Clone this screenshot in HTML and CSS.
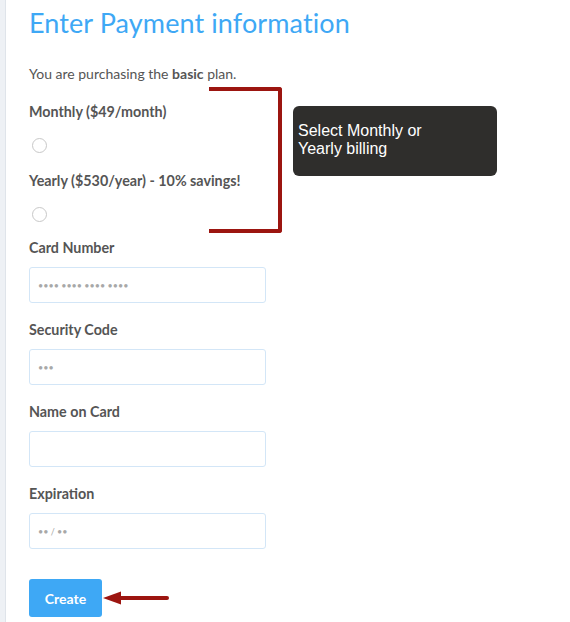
FILE: index.html
```html
<!DOCTYPE html>
<html>
<head>
<meta charset="utf-8">
<link rel="stylesheet" href="styles.css">
</head>
<body>
<div class="page">
  <div class="rail"></div>
  <main class="content">
    <h1 class="title">Enter Payment information</h1>
    <p class="intro">You are purchasing the <b>basic</b> plan.</p>
    <form class="form">
      <div class="field radio-field">
        <label class="label">Monthly ($49/month)</label>
        <input type="radio" name="plan" class="radio">
      </div>
      <div class="field radio-field">
        <label class="label">Yearly ($530/year) - 10% savings!</label>
        <input type="radio" name="plan" class="radio">
      </div>
      <div class="field text-field">
        <label class="label">Card Number</label>
        <input class="input" placeholder="•••• •••• •••• ••••">
      </div>
      <div class="field text-field">
        <label class="label">Security Code</label>
        <input class="input" placeholder="•••">
      </div>
      <div class="field text-field">
        <label class="label">Name on Card</label>
        <input class="input">
      </div>
      <div class="field text-field">
        <label class="label">Expiration</label>
        <input class="input" placeholder="•• / ••">
      </div>
      <button type="button" class="btn">Create</button>
    </form>
  </main>
  <div class="bracket"></div>
  <div class="tip">Select Monthly or<br>Yearly billing</div>
  <svg class="arrow" width="72" height="16" viewBox="0 0 72 16">
    <path d="M18 8 H66" stroke="#9c1510" stroke-width="4" stroke-linecap="round" fill="none"/>
    <path d="M2 8 L20 1.5 L20 14.5 Z" fill="#9c1510"/>
  </svg>
</div>
</body>
</html>
```

FILE: styles.css
```css
* { box-sizing: border-box; }
html, body { margin: 0; padding: 0; background: #fff; }
body { width: 570px; height: 622px; overflow: hidden; font-family: "Lato", "Open Sans", sans-serif; }
.page { position: relative; display: flex; height: 622px; }
.rail { width: 6px; flex: none; background: #eef1f5; border-right: 1px solid #dfe4ea; }
.content { padding: 6px 0 0 23px; color: #555; }
.title { margin: 0; font-weight: 400; font-size: 27px; line-height: 34px; color: #3ea8f5; letter-spacing: 0.1px; }
.intro { margin: 24px 0 0; font-size: 14px; line-height: 20px; }
.intro b { font-weight: 700; }
.form { display: flex; flex-direction: column; margin-top: 18px; }
.field { display: flex; flex-direction: column; }
.label { font-size: 14.3px; line-height: 20px; font-weight: 700; color: #555; }
.radio-field { height: 69px; }
.radio { appearance: none; -webkit-appearance: none; width: 15px; height: 15px; border: 1px solid #c8c8c8; border-radius: 50%; margin: 16px 0 0 3px; background: #fff; }
.text-field { height: 82px; }
.radio-field + .text-field { margin-top: -2px; }
.input { margin-top: 9px; width: 237px; height: 36px; border: 1px solid #d3e6f7; border-radius: 3px; padding: 0 8px; font-family: "Lato", sans-serif; font-size: 9px; color: #555; outline: none; }
.input::placeholder { color: #a8a8a8; }
.btn { margin-top: 13px; width: 73px; height: 38px; border: none; border-radius: 3px; background: #3ea8f5; color: #fff; font-family: "Lato", sans-serif; font-size: 14px; font-weight: 700; padding: 0; }
.bracket { position: absolute; left: 209px; top: 87px; width: 73px; height: 146px; border: 4px solid #9c1510; border-left: none; border-radius: 0 3px 3px 0; }
.tip { position: absolute; left: 293px; top: 106px; width: 204px; height: 70px; background: #2f2e2c; border-radius: 6px; color: #fff; font-family: "Liberation Sans", Arial, sans-serif; font-size: 16px; line-height: 18px; padding: 16px 0 0 5px; }
.arrow { position: absolute; left: 101px; top: 590px; }
```
